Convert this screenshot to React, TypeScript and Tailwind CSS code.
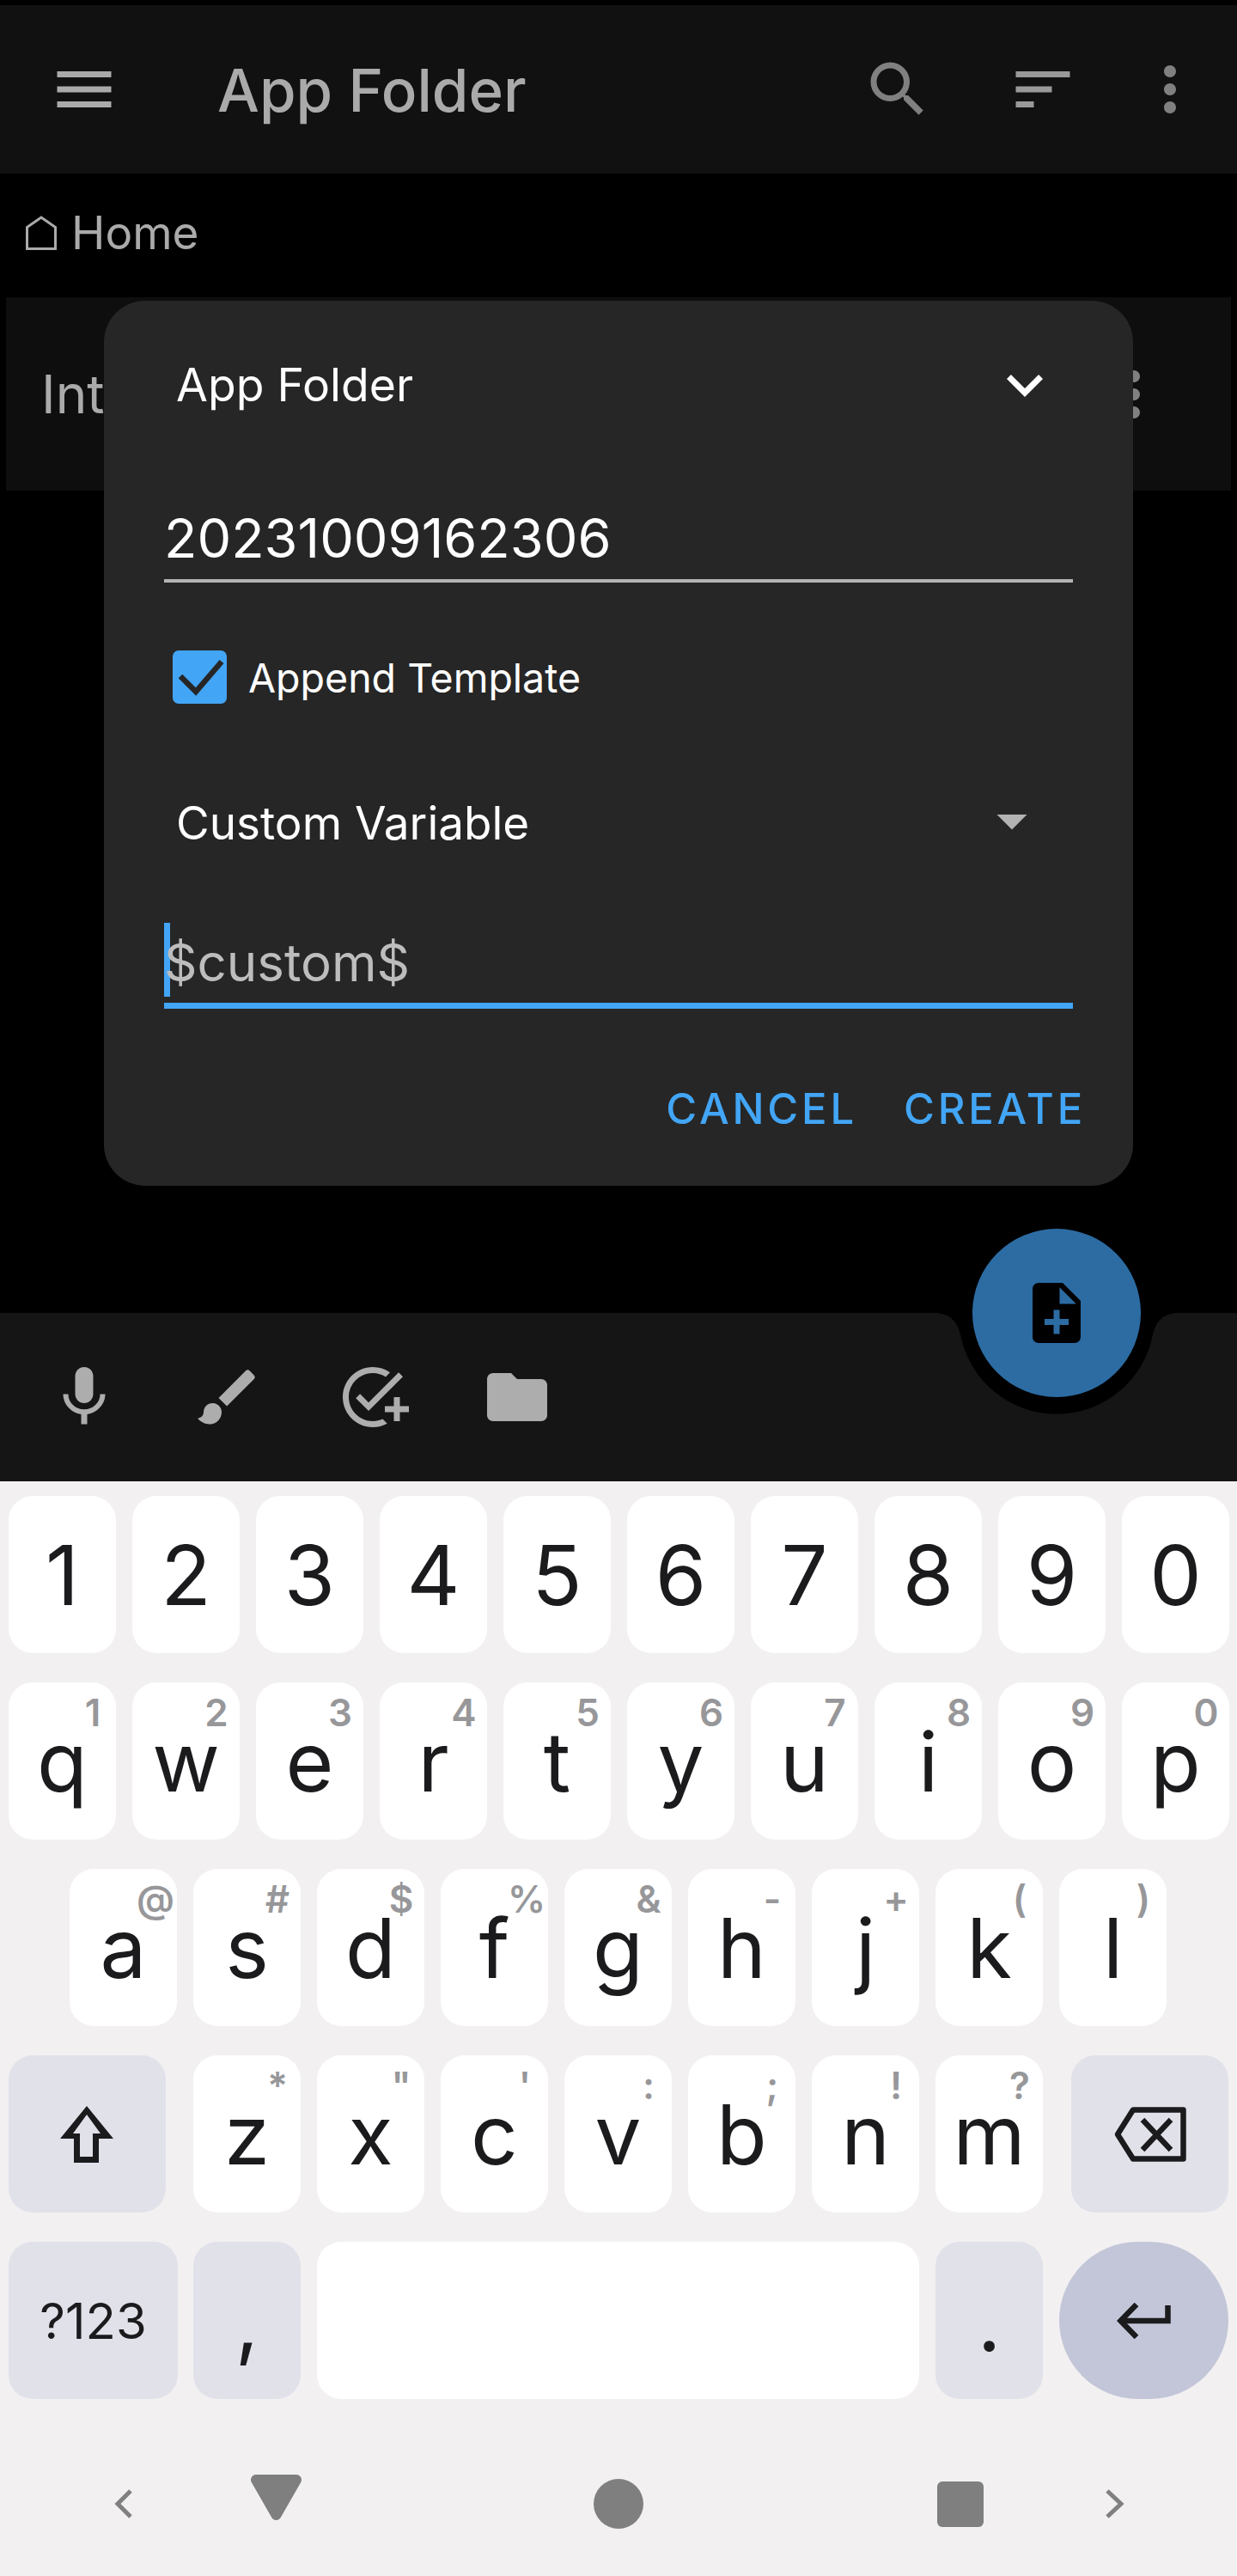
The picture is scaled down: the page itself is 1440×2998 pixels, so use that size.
import { ReactNode } from "react";
import {
  MdAddTask,
  MdArrowDropDown,
  MdBrush,
  MdFolder,
  MdKeyboardArrowDown,
  MdMenu,
  MdMic,
  MdMoreVert,
  MdSearch,
  MdSort,
} from "react-icons/md";

interface KeyProps {
  label?: string;
  hint?: string;
  className?: string;
  children?: ReactNode;
}

const Key = ({ label, hint, className = "w-[125px] bg-white rounded-[28px]", children }: KeyProps) => (
  <div className={`relative h-[183px] shrink-0 flex items-center justify-center ${className}`}>
    {label && <span className="pt-[1px] text-[96px] leading-none text-[#1b1b1d]">{label}</span>}
    {hint && (
      <span className="absolute top-[13px] right-[7px] w-[40px] text-center text-[44px] leading-none font-semibold text-[#97979a]">
        {hint}
      </span>
    )}
    {children}
  </div>
);

const digitRow = "1234567890".split("");
const topRow = [
  ["q", "1"],
  ["w", "2"],
  ["e", "3"],
  ["r", "4"],
  ["t", "5"],
  ["y", "6"],
  ["u", "7"],
  ["i", "8"],
  ["o", "9"],
  ["p", "0"],
];
const homeRow = [
  ["a", "@"],
  ["s", "#"],
  ["d", "$"],
  ["f", "%"],
  ["g", "&"],
  ["h", "-"],
  ["j", "+"],
  ["k", "("],
  ["l", ")"],
];
const bottomRow = [
  ["z", "*"],
  ["x", '"'],
  ["c", "'"],
  ["v", ":"],
  ["b", ";"],
  ["n", "!"],
  ["m", "?"],
];

const fnKey = "bg-[#e1e1ea] rounded-[28px]";

const Keyboard = () => (
  <div className="h-[1274px] bg-[#f2f0f1] flex flex-col pt-[17px]">
    <div className="flex flex-col gap-[34px] pl-[10px]">
      <div className="flex gap-[19px]">
        {digitRow.map((d) => (
          <Key key={d} label={d} />
        ))}
      </div>
      <div className="flex gap-[19px]">
        {topRow.map(([l, h]) => (
          <Key key={l} label={l} hint={h} />
        ))}
      </div>
      <div className="flex gap-[19px] pl-[71px]">
        {homeRow.map(([l, h]) => (
          <Key key={l} label={l} hint={h} />
        ))}
      </div>
      <div className="flex gap-[19px]">
        <Key className={`w-[183px] mr-[13px] ${fnKey}`}>
          <svg className="mr-[2px]" width="62" height="66" viewBox="0 0 62 66" fill="#1b1b1d" fillRule="evenodd">
            <path d="M31 0 62 38H45V66H16V38H0ZM31 10 15 32H23V59H38V32H47Z" />
          </svg>
        </Key>
        {bottomRow.map(([l, h]) => (
          <Key key={l} label={l} hint={h} />
        ))}
        <Key className={`w-[183px] ml-[14px] ${fnKey}`}>
          <svg width="84" height="64" viewBox="0 0 84 64" fill="none" stroke="#1b1b1d" strokeWidth="6.5" strokeLinejoin="round">
            <path d="M4 32 22 3.5H80.5V60.5H22Z" />
            <path d="M33 15 66 50M66 15 33 50" />
          </svg>
        </Key>
      </div>
      <div className="flex gap-[19px]">
        <Key className={`w-[197px] -mr-px ${fnKey}`}>
          <span className="text-[58px] leading-none text-[#1b1b1d]">?123</span>
        </Key>
        <Key label="," className={`w-[125px] ${fnKey}`} />
        <Key className="w-[701px] bg-white rounded-[28px]" />
        <Key label="." className={`w-[125px] ${fnKey}`} />
        <Key className="w-[197px] bg-[#c3c6d8] rounded-full">
          <svg width="63" height="42" viewBox="0 0 63 42" fill="none" stroke="#1b1b1d" strokeWidth="6.5">
            <path d="M59.5 3V21H5" />
            <path d="M23 2 4.5 21 23 40" />
          </svg>
        </Key>
      </div>
    </div>
    <div className="flex-1 flex items-center pt-[38px]">
      <svg className="ml-[133px]" width="21" height="34" viewBox="0 0 21 34" fill="none" stroke="#808080" strokeWidth="5">
        <path d="M19 2 4 17 19 32" />
      </svg>
      <svg className="ml-[138px] mb-[15px]" width="59" height="53" viewBox="0 0 59 53" fill="#7f7f7f" stroke="#7f7f7f" strokeWidth="12" strokeLinejoin="round">
        <path d="M6 6H53L29.5 47Z" />
      </svg>
      <div className="ml-[340px] w-[58px] h-[58px] rounded-full bg-[#7f7f7f]" />
      <div className="ml-[342px] w-[54px] h-[53px] rounded-[6px] bg-[#7f7f7f]" />
      <svg className="ml-[142px]" width="22" height="34" viewBox="0 0 22 34" fill="none" stroke="#808080" strokeWidth="5">
        <path d="M2 2 18 17 2 32" />
      </svg>
    </div>
  </div>
);

const NewEntryDialog = () => (
  <div className="absolute left-[121px] top-[350px] w-[1198px] h-[1030px] rounded-[48px] bg-[#262626] text-white">
    <div className="h-[196px] flex items-center justify-between pl-[84px] pr-[84px]">
      <span className="text-[53.5px] leading-none">App Folder</span>
      <MdKeyboardArrowDown size={84} />
    </div>
    <div className="mx-[70px] h-[132px] flex items-end pb-[16px] border-b-[4px] border-[#b3b3b3]">
      <span className="text-[63px] leading-none">20231009162306</span>
    </div>
    <div className="h-[220px] flex items-center pl-[80px]">
      <div className="w-[63px] h-[62px] rounded-[7px] bg-[#42a5f5]">
        <svg width="63" height="62" viewBox="0 0 63 62" fill="none" stroke="#262626" strokeWidth="6.5">
          <path d="M9 30 27 48 57 13" />
        </svg>
      </div>
      <span className="ml-[25px] pt-[2px] text-[46.5px] leading-none">Append Template</span>
    </div>
    <div className="h-[120px] flex items-center justify-between pl-[84px] pr-[99px]">
      <span className="text-[53px] leading-none">Custom Variable</span>
      <MdArrowDropDown size={84} className="mb-[6px] text-[#b3b3b3]" />
    </div>
    <div className="mx-[70px] h-[156px] flex items-end pb-[7px] border-b-[7px] border-[#42a5f5]">
      <div className="w-[7px] h-[86px] bg-[#42a5f5]" />
      <span className="-ml-[7px] pb-[10px] text-[60px] leading-none text-[#bdbdbd]">$custom$</span>
    </div>
    <div className="h-[206px] flex items-center justify-end gap-[54px] pt-[26px] pr-[55px] text-[49px] leading-none font-medium tracking-[3.8px] text-[#42a5f5]">
      <span>CANCEL</span>
      <span>CREATE</span>
    </div>
  </div>
);

export default function App() {
  return (
    <div className="relative w-[1440px] h-[2998px] overflow-hidden bg-black flex flex-col font-['Inter',sans-serif]">
      <div className="mt-[6px] h-[196px] shrink-0 bg-[#111111] flex items-center pl-[56px] pr-[36px] text-[#aaaaaa]">
        <MdMenu size={84} />
        <span className="ml-[113px] flex-1 pt-[2px] text-[69px] leading-none font-medium">App Folder</span>
        <MdSearch size={84} className="text-[#808080]" />
        <MdSort size={84} className="ml-[85px] text-[#999999]" />
        <MdMoreVert size={84} className="ml-[64px] text-[#808080]" />
      </div>

      <div className="h-[144px] shrink-0 flex items-center pl-[30px] pb-[6px] text-[#aaaaaa]">
        <svg width="36" height="40" viewBox="0 0 36 40" fill="none" stroke="#aaaaaa" strokeWidth="3">
          <path d="M1.5 38.5V13.5L18 2 34.5 13.5V38.5Z" />
        </svg>
        <span className="ml-[17px] text-[53px] leading-none">Home</span>
      </div>

      <div className="mx-[7px] h-[225px] shrink-0 bg-[#0e0e0e] flex items-center justify-between pl-[41px] pr-[71px] text-[#aaaaaa]">
        <span className="text-[62px] leading-none">Int</span>
        <MdMoreVert size={84} className="text-[#808080]" />
      </div>

      <div className="flex-1" />

      <div className="relative h-[196px] shrink-0 bg-[#151515] flex items-center pl-[56px] text-[#adadad]">
        <MdMic size={84} />
        <MdBrush size={84} className="ml-[83px]" />
        <MdAddTask size={84} className="ml-[85px]" />
        <MdFolder size={84} className="ml-[84px]" />
        <svg className="absolute left-[1085px] top-0" width="290" height="118" viewBox="0 0 290 118" fill="#000000">
          <path d="M3 0C20 0 29 9 33 25A114 114 0 0 0 257 25C261 9 270 0 287 0Z" />
        </svg>
        <div className="absolute left-[1132px] -top-[98px] w-[196px] h-[196px] rounded-full bg-[#2c6ca3] flex items-center justify-center">
          <svg width="84" height="84" viewBox="0 0 24 24" fill="#000000">
            <path d="M14 2H6c-1.1 0-1.99.9-1.99 2L4 20c0 1.1.89 2 1.99 2H18c1.1 0 2-.9 2-2V8l-6-6zm2 14h-3v3h-2v-3H8v-2h3v-3h2v3h3v2zm-3-7V3.5L18.5 9H13z" />
          </svg>
        </div>
      </div>

      <Keyboard />
      <NewEntryDialog />
    </div>
  );
}
